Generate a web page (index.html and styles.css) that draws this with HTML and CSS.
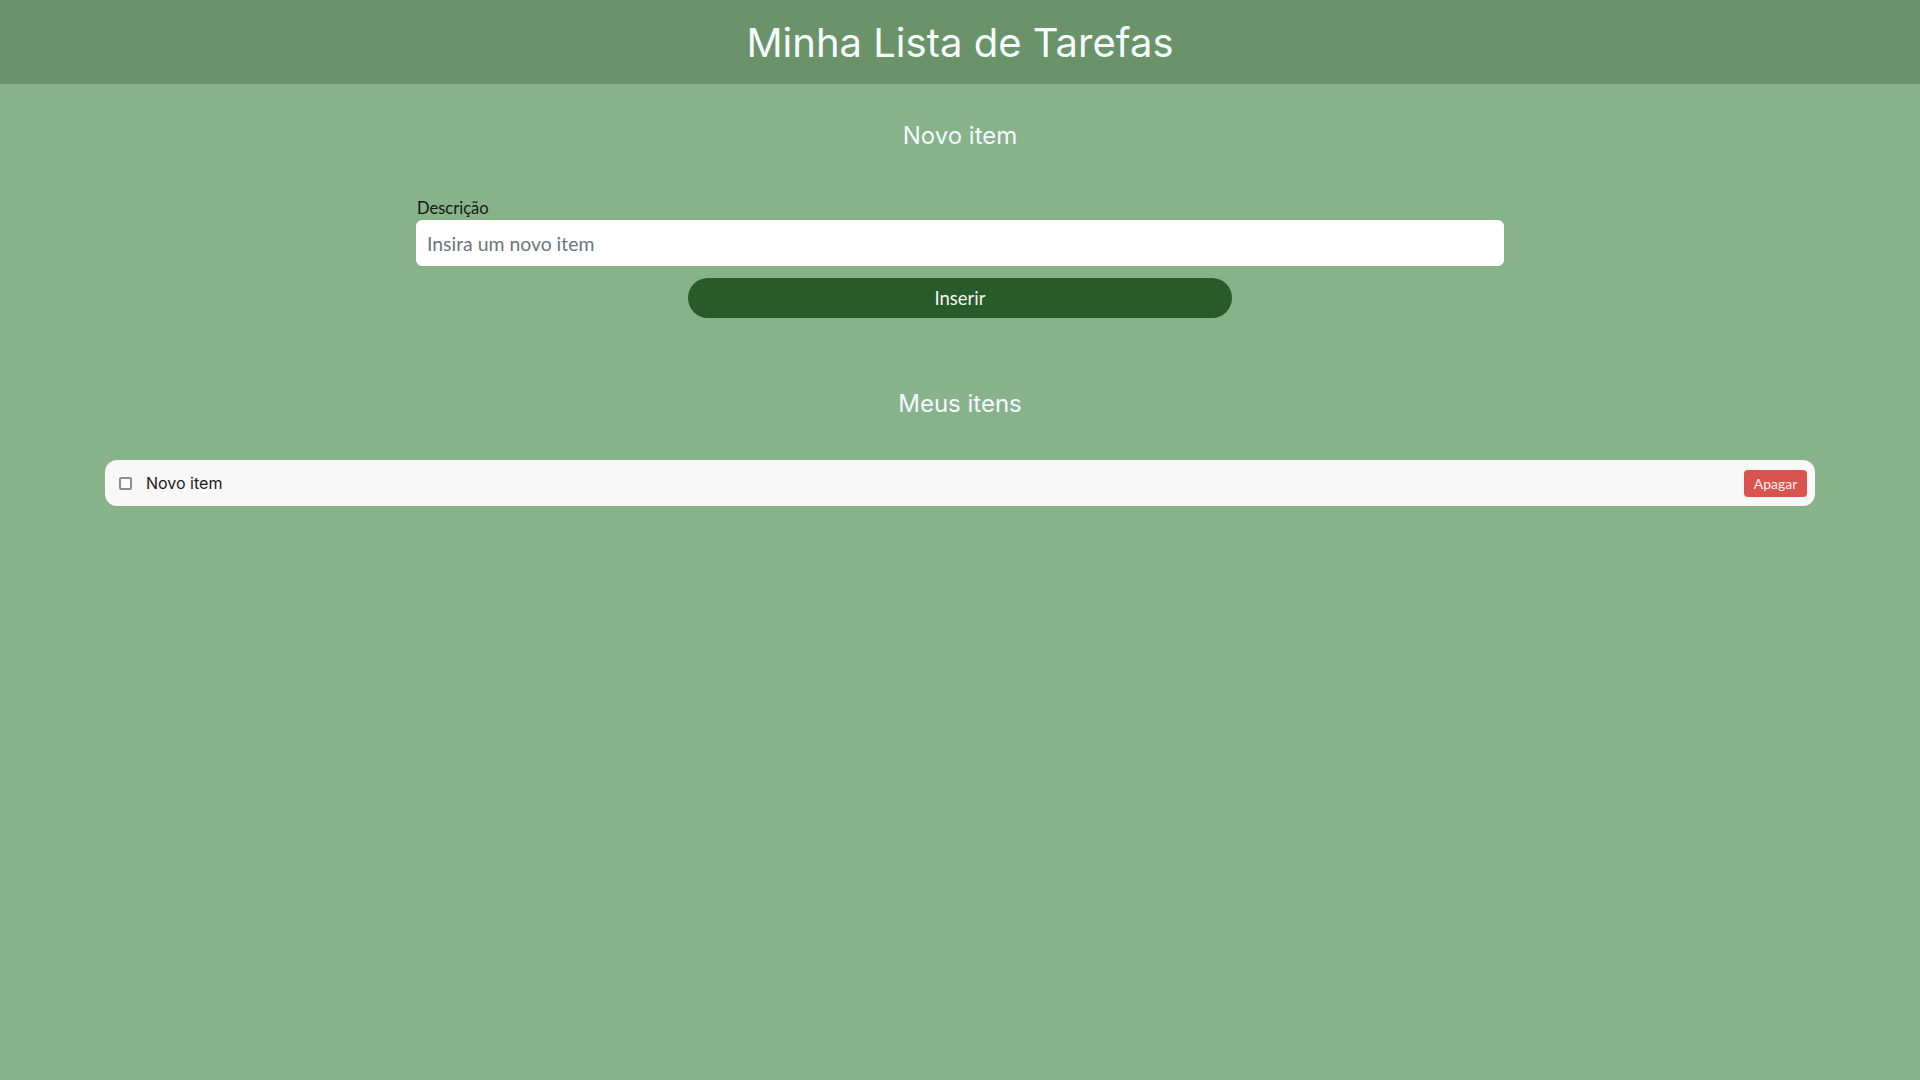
FILE: index.html
```html
<!DOCTYPE html>
<html lang="pt-BR">
<head>
<meta charset="utf-8">
<title>Minha Lista de Tarefas</title>
<link rel="stylesheet" href="styles.css">
</head>
<body>
<header class="topbar">
  <h1 class="title">Minha Lista de Tarefas</h1>
</header>
<main class="content">
  <section class="new-item">
    <h2 class="section-title">Novo item</h2>
    <form class="form" onsubmit="return false">
      <label class="label" for="desc">Descrição</label>
      <input class="input" id="desc" type="text" placeholder="Insira um novo item">
      <button class="btn-insert" type="submit">Inserir</button>
    </form>
  </section>
  <section class="items">
    <h2 class="section-title section-title--list">Meus itens</h2>
    <ul class="list">
      <li class="item">
        <input class="check" type="checkbox">
        <span class="item-text">Novo item</span>
        <button class="btn-delete" type="button">Apagar</button>
      </li>
    </ul>
  </section>
</main>
</body>
</html>
```
FILE: styles.css
```css
* { box-sizing: border-box; }
html, body { margin: 0; padding: 0; }
body {
  background: #88b28a;
  font-family: Inter, "Noto Sans", sans-serif;
  min-height: 100vh;
}
.topbar {
  height: 84px;
  padding-top: 2px;
  background: #6a936a;
  display: flex;
  align-items: center;
  justify-content: center;
}
.title {
  margin: 0;
  font-family: Inter, sans-serif;
  font-weight: 400;
  font-size: 40px;
  line-height: 48px;
  color: #f7fbff;
}
.section-title {
  margin: 37px 0 46px;
  text-align: center;
  font-family: Inter, sans-serif;
  font-weight: 400;
  font-size: 24px;
  line-height: 29px;
  color: #f4f9ff;
}
.section-title--list { margin: 71px 0 42px; }
.form {
  width: 1088px;
  margin: 0 auto;
  display: flex;
  flex-direction: column;
}
.label {
  font-family: "Liberation Sans Narrow", "Lato", sans-serif;
  font-size: 16.5px;
  line-height: 24px;
  color: #141814;
  padding-left: 1px;
}
.input {
  height: 46px;
  width: 100%;
  border: 1px solid #fff;
  border-radius: 6px;
  background: #fff;
  padding: 0 10px;
  font-family: Lato, sans-serif;
  font-size: 19.4px;
  color: #212529;
  outline: none;
}
.input::placeholder { color: #6c757d; }
.btn-insert {
  align-self: center;
  width: 544px;
  height: 40px;
  margin-top: 12px;
  border: none;
  border-radius: 20px;
  background: #295a29;
  color: #f2f6f2;
  font-family: Lato, sans-serif;
  font-size: 18.5px;
  cursor: pointer;
}
.list {
  list-style: none;
  margin: 0 105px;
  padding: 0;
}
.item {
  height: 46px;
  background: #f8f8f8;
  border-radius: 12px;
  display: flex;
  align-items: center;
  padding: 0 8px 0 14px;
}
.check {
  appearance: none;
  -webkit-appearance: none;
  width: 13px;
  height: 13px;
  margin: 0 14px 0 0;
  border: 2px solid #8d8b9b;
  border-radius: 2px;
  background: #fff;
  flex: none;
}
.item-text {
  flex: 1;
  font-family: Inter, sans-serif;
  font-size: 16px;
  color: #1d2020;
}
.btn-delete {
  height: 27px;
  width: 63px;
  border: none;
  border-radius: 4px;
  background: #d9534f;
  color: #fdf0f0;
  font-family: Lato, sans-serif;
  font-size: 14px;
  padding: 0;
  cursor: pointer;
}
```
